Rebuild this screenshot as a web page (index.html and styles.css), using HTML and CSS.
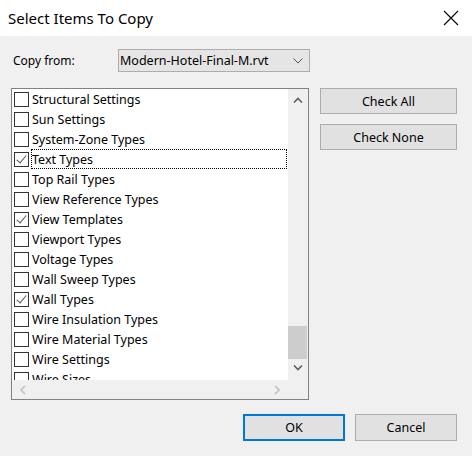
FILE: index.html
```html
<html>
    <head>
        <link rel="stylesheet" href="styles.css">
    </head>
    <body>
        <div class="dialog">
            <div class="titlebar">
                <span class="title">Select Items To Copy</span>
                <svg class="close" width="16" height="16" viewBox="0 0 16 16">
                    <path d="M1 1 L15 15 M15 1 L1 15" stroke="#000" stroke-width="1.1" fill="none"/>
                </svg>
            </div>
            <div class="content">
                <div class="from-row">
                    <span class="from-label">Copy from:</span>
                    <div class="combo">
                        <span>Modern-Hotel-Final-M.rvt</span>
                        <svg width="10" height="6" viewBox="0 0 10 6">
                            <path d="M0.5 0.5 L5 5 L9.5 0.5" stroke="#555" stroke-width="1" fill="none"/>
                        </svg>
                    </div>
                </div>
                <div class="main">
                    <div class="listbox">
                        <div class="items">
                            <div class="item"><span class="check"></span>Structural Settings</div>
                            <div class="item"><span class="check"></span>Sun Settings</div>
                            <div class="item"><span class="check"></span>System-Zone Types</div>
                            <div class="item focused"><span class="check checked"></span><span class="label">Text Types</span></div>
                            <div class="item"><span class="check"></span>Top Rail Types</div>
                            <div class="item"><span class="check"></span>View Reference Types</div>
                            <div class="item"><span class="check checked"></span>View Templates</div>
                            <div class="item"><span class="check"></span>Viewport Types</div>
                            <div class="item"><span class="check"></span>Voltage Types</div>
                            <div class="item"><span class="check"></span>Wall Sweep Types</div>
                            <div class="item"><span class="check checked"></span>Wall Types</div>
                            <div class="item"><span class="check"></span>Wire Insulation Types</div>
                            <div class="item"><span class="check"></span>Wire Material Types</div>
                            <div class="item"><span class="check"></span>Wire Settings</div>
                            <div class="item"><span class="check"></span>Wire Sizes</div>
                        </div>
                        <div class="vscroll">
                            <svg width="10" height="6" viewBox="0 0 10 6">
                                <path d="M1 5.5 L5 1.5 L9 5.5" stroke="#606060" stroke-width="1.6" fill="none"/>
                            </svg>
                            <div class="track"><div class="thumb"></div></div>
                            <svg width="10" height="6" viewBox="0 0 10 6">
                                <path d="M1 0.5 L5 4.5 L9 0.5" stroke="#606060" stroke-width="1.6" fill="none"/>
                            </svg>
                        </div>
                        <div class="hscroll">
                            <svg width="6" height="10" viewBox="0 0 6 10">
                                <path d="M5 1 L1 5 L5 9" stroke="#c2c2c2" stroke-width="1.6" fill="none"/>
                            </svg>
                            <svg width="6" height="10" viewBox="0 0 6 10">
                                <path d="M1 1 L5 5 L1 9" stroke="#c2c2c2" stroke-width="1.6" fill="none"/>
                            </svg>
                        </div>
                        <div class="corner"></div>
                    </div>
                    <div class="side">
                        <button class="btn side-btn">Check All</button>
                        <button class="btn side-btn">Check None</button>
                    </div>
                </div>
                <div class="footer">
                    <button class="btn ok">OK</button>
                    <button class="btn">Cancel</button>
                </div>
            </div>
        </div>
    </body>
</html>
```

FILE: styles.css
```css
body{
    margin:0;
    font-family:"Noto Sans","Liberation Sans",sans-serif;
    font-size:12px;
    color:#000;
}
.dialog{
    width:472px;
    height:456px;
    display:flex;
    flex-direction:column;
    background-color:#f0f0f0;
}
.titlebar{
    height:36px;
    background-color:#fff;
    display:flex;
    align-items:center;
    justify-content:space-between;
    padding:0 13px 0 8px;
    box-sizing:border-box;
}
.title{
    font-size:15px;
}
.close{
    display:block;
}
.content{
    flex:1;
    padding:13px 0 0 11px;
    display:flex;
    flex-direction:column;
}
.from-row{
    display:flex;
    align-items:center;
    height:23px;
}
.from-label{
    width:105px;
    padding-left:2px;
}
.combo{
    width:192px;
    height:23px;
    box-sizing:border-box;
    border:1px solid #adadad;
    background-color:#e5e5e5;
    display:flex;
    align-items:center;
    justify-content:space-between;
    padding:0 6px 0 1px;
    font-size:12.5px;
}
.main{
    display:flex;
    margin-top:16px;
    gap:11px;
}
.listbox{
    width:298px;
    height:312px;
    box-sizing:border-box;
    border:1px solid #828282;
    display:grid;
    grid-template-columns:1fr 20px;
    grid-template-rows:1fr 19px;
    background-color:#fff;
}
.items{
    overflow:hidden;
    padding-left:2px;
}
.item{
    height:20px;
    display:flex;
    align-items:center;
    white-space:nowrap;
    font-size:12.5px;
}
.check{
    width:15px;
    height:15px;
    box-sizing:border-box;
    border:1px solid #333;
    margin-right:3px;
    flex:none;
    position:relative;
}
.checked::after{
    content:"";
    position:absolute;
    left:4px;
    top:0px;
    width:4px;
    height:9px;
    border-right:1px solid #555;
    border-bottom:1px solid #555;
    transform:rotate(40deg);
}
.focused .label{
    flex:1;
    height:20px;
    line-height:19px;
    box-sizing:border-box;
    border:1px dotted #000;
    margin-left:-1px;
    margin-right:1px;
}
.vscroll{
    background-color:#f0f0f0;
    display:flex;
    flex-direction:column;
    align-items:center;
    padding:8px 0 9px 0;
}
.track{
    flex:1;
    width:100%;
    display:flex;
    flex-direction:column;
    justify-content:flex-end;
    padding-bottom:6px;
}
.thumb{
    height:33px;
    background-color:#cdcdcd;
    margin:0 1px 0 0;
}
.hscroll{
    background-color:#f0f0f0;
    display:flex;
    align-items:center;
    justify-content:space-between;
    padding:0 8px 0 8px;
}
.corner{
    background-color:#f0f0f0;
}
.side{
    display:flex;
    flex-direction:column;
    gap:10px;
}
.btn{
    font-family:"Noto Sans","Liberation Sans",sans-serif;
    font-size:12.5px;
    color:#000;
    background-color:#e1e1e1;
    border:1px solid #adadad;
    width:102px;
    height:27px;
    padding:0;
}
.side-btn{
    width:137px;
    height:26px;
}
.footer{
    display:flex;
    justify-content:flex-end;
    gap:10px;
    margin-top:14px;
    padding-right:15px;
}
.ok{
    border:2px solid #0078d7;
}
```
